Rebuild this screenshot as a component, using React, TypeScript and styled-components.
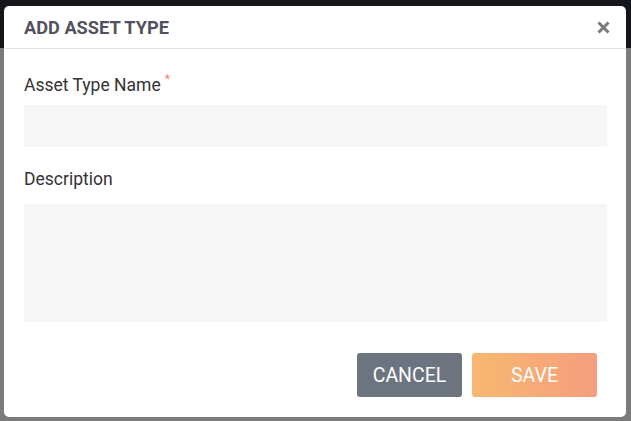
import styled, { createGlobalStyle } from 'styled-components';

const Global = createGlobalStyle`
	html, body {
		margin: 0;
		padding: 0;
		background: #7b7b7b;
		font-family: Roboto, "Liberation Sans", sans-serif;
	}
`;

const Page = styled.div`
	position: relative;
	width: 631px;
	height: 421px;
	overflow: hidden;
	background: #7b7b7b;
`;

const TopBar = styled.div`
	height: 48px;
	background: #15161b;
`;

const Backdrop = styled.div`
	position: absolute;
	inset: 0;
	padding: 6px 5px 4px 4px;
	box-sizing: border-box;
	display: flex;
`;

const Modal = styled.div`
	flex: 1;
	background: #fff;
	border-radius: 5px;
	display: flex;
	flex-direction: column;
`;

const Header = styled.div`
	height: 42px;
	padding: 0 16px 0 20px;
	border-bottom: 1px solid #e2e2e2;
	display: flex;
	align-items: center;
	justify-content: space-between;
`;

const Title = styled.h2`
	margin: 0;
	font-size: 18.2px;
	font-weight: 700;
	color: #52525e;
`;

const Close = styled.button`
	border: 0;
	background: none;
	padding: 0;
	width: 14px;
	height: 14px;
	display: flex;
	align-items: center;
	justify-content: center;
	cursor: pointer;
`;

const Body = styled.div`
	padding: 21px 19px 0 20px;
	display: flex;
	flex-direction: column;
`;

const Label = styled.label`
	font-size: 17.5px;
	color: #333;
	height: 20px;
	line-height: 20px;
	margin-bottom: 15px;
`;

const Star = styled.sup`
	color: #f4806f;
	font-size: 12px;
	margin-left: 4px;
	position: relative;
	top: -1px;
`;

const Field = styled.div<{ $h: number }>`
	height: ${(p) => p.$h}px;
	background: #f6f6f6;
	margin-bottom: 22px;
`;

const Footer = styled.div`
	display: flex;
	justify-content: flex-end;
	gap: 10px;
	padding: 9px 29px 0 0;
`;

const Button = styled.button<{ $primary?: boolean }>`
	height: 44px;
	width: ${(p) => (p.$primary ? 125 : 105)}px;
	border: 0;
	border-radius: 3px;
	color: #fff;
	font-family: Roboto, "Liberation Sans", sans-serif;
	font-size: 19.5px;
	font-weight: 400;
	background: ${(p) => (p.$primary ? 'linear-gradient(90deg, #f8b76f, #f59e7f)' : '#6c7480')};
`;

export default function App() {
	return (
		<Page>
			<Global />
			<TopBar />
			<Backdrop>
				<Modal>
					<Header>
						<Title>ADD ASSET TYPE</Title>
						<Close aria-label='close'>
							<svg width='13' height='13' viewBox='0 0 13 13'>
								<path d='M1.5 1.5 L11.5 11.5 M11.5 1.5 L1.5 11.5' stroke='#7a7a7a' strokeWidth='3' />
							</svg>
						</Close>
					</Header>
					<Body>
						<Label>
							Asset Type Name<Star>*</Star>
						</Label>
						<Field $h={42} />
						<Label>Description</Label>
						<Field $h={118} />
					</Body>
					<Footer>
						<Button>CANCEL</Button>
						<Button $primary>SAVE</Button>
					</Footer>
				</Modal>
			</Backdrop>
		</Page>
	);
}
